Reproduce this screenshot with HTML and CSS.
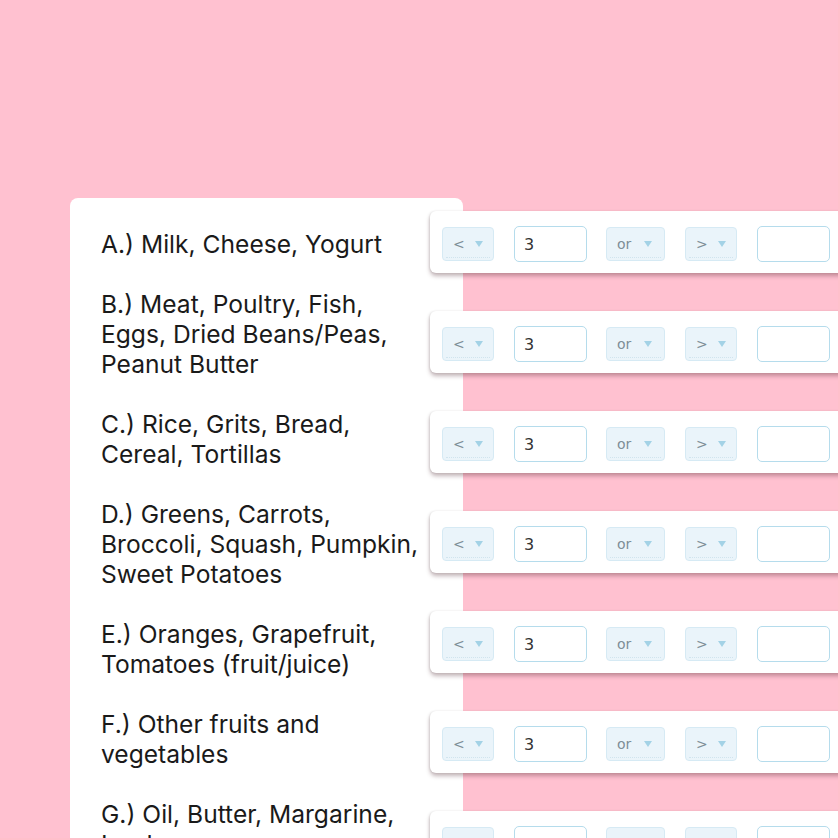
FILE: index.html
```html
<!DOCTYPE html>
<html>
<head>
<meta charset="utf-8">
<link rel="stylesheet" href="styles.css">
</head>
<body>
<div class="page">
  <div class="card">
    <div class="labels">
      <div class="label">A.) Milk, Cheese, Yogurt</div>
      <div class="label">B.) Meat, Poultry, Fish,<br>Eggs, Dried Beans/Peas,<br>Peanut Butter</div>
      <div class="label">C.) Rice, Grits, Bread,<br>Cereal, Tortillas</div>
      <div class="label">D.) Greens, Carrots,<br>Broccoli, Squash, Pumpkin,<br>Sweet Potatoes</div>
      <div class="label">E.) Oranges, Grapefruit,<br>Tomatoes (fruit/juice)</div>
      <div class="label">F.) Other fruits and<br>vegetables</div>
      <div class="label">G.) Oil, Butter, Margarine,<br>Lard</div>
    </div>
    <div class="bars">
      <div class="bar">
        <div class="sel s-lt"><span>&lt;</span><svg class="arr" viewBox="0 0 8 6"><path d="M0 0H8L4 6Z"/></svg></div>
        <div class="inp">3</div>
        <div class="sel s-or"><span>or</span><svg class="arr" viewBox="0 0 8 6"><path d="M0 0H8L4 6Z"/></svg></div>
        <div class="sel s-lt"><span>&gt;</span><svg class="arr" viewBox="0 0 8 6"><path d="M0 0H8L4 6Z"/></svg></div>
        <div class="inp"></div>
      </div>
      <div class="bar">
        <div class="sel s-lt"><span>&lt;</span><svg class="arr" viewBox="0 0 8 6"><path d="M0 0H8L4 6Z"/></svg></div>
        <div class="inp">3</div>
        <div class="sel s-or"><span>or</span><svg class="arr" viewBox="0 0 8 6"><path d="M0 0H8L4 6Z"/></svg></div>
        <div class="sel s-lt"><span>&gt;</span><svg class="arr" viewBox="0 0 8 6"><path d="M0 0H8L4 6Z"/></svg></div>
        <div class="inp"></div>
      </div>
      <div class="bar">
        <div class="sel s-lt"><span>&lt;</span><svg class="arr" viewBox="0 0 8 6"><path d="M0 0H8L4 6Z"/></svg></div>
        <div class="inp">3</div>
        <div class="sel s-or"><span>or</span><svg class="arr" viewBox="0 0 8 6"><path d="M0 0H8L4 6Z"/></svg></div>
        <div class="sel s-lt"><span>&gt;</span><svg class="arr" viewBox="0 0 8 6"><path d="M0 0H8L4 6Z"/></svg></div>
        <div class="inp"></div>
      </div>
      <div class="bar">
        <div class="sel s-lt"><span>&lt;</span><svg class="arr" viewBox="0 0 8 6"><path d="M0 0H8L4 6Z"/></svg></div>
        <div class="inp">3</div>
        <div class="sel s-or"><span>or</span><svg class="arr" viewBox="0 0 8 6"><path d="M0 0H8L4 6Z"/></svg></div>
        <div class="sel s-lt"><span>&gt;</span><svg class="arr" viewBox="0 0 8 6"><path d="M0 0H8L4 6Z"/></svg></div>
        <div class="inp"></div>
      </div>
      <div class="bar">
        <div class="sel s-lt"><span>&lt;</span><svg class="arr" viewBox="0 0 8 6"><path d="M0 0H8L4 6Z"/></svg></div>
        <div class="inp">3</div>
        <div class="sel s-or"><span>or</span><svg class="arr" viewBox="0 0 8 6"><path d="M0 0H8L4 6Z"/></svg></div>
        <div class="sel s-lt"><span>&gt;</span><svg class="arr" viewBox="0 0 8 6"><path d="M0 0H8L4 6Z"/></svg></div>
        <div class="inp"></div>
      </div>
      <div class="bar">
        <div class="sel s-lt"><span>&lt;</span><svg class="arr" viewBox="0 0 8 6"><path d="M0 0H8L4 6Z"/></svg></div>
        <div class="inp">3</div>
        <div class="sel s-or"><span>or</span><svg class="arr" viewBox="0 0 8 6"><path d="M0 0H8L4 6Z"/></svg></div>
        <div class="sel s-lt"><span>&gt;</span><svg class="arr" viewBox="0 0 8 6"><path d="M0 0H8L4 6Z"/></svg></div>
        <div class="inp"></div>
      </div>
      <div class="bar">
        <div class="sel s-lt"><span>&lt;</span><svg class="arr" viewBox="0 0 8 6"><path d="M0 0H8L4 6Z"/></svg></div>
        <div class="inp">3</div>
        <div class="sel s-or"><span>or</span><svg class="arr" viewBox="0 0 8 6"><path d="M0 0H8L4 6Z"/></svg></div>
        <div class="sel s-lt"><span>&gt;</span><svg class="arr" viewBox="0 0 8 6"><path d="M0 0H8L4 6Z"/></svg></div>
        <div class="inp"></div>
      </div>
    </div>
  </div>
</div>
</body>
</html>
```
FILE: styles.css
```css
html, body {
  margin: 0;
  padding: 0;
  height: 838px;
  overflow: hidden;
  background: #ffc1d0;
}
.page {
  padding: 198px 0 0 70px;
}
.card {
  width: 393px;
  min-height: 800px;
  background: #ffffff;
  border-radius: 8px 8px 0 0;
  display: flex;
  align-items: flex-start;
}
.labels {
  flex: 0 0 360px;
  box-sizing: border-box;
  padding: 31px 0 0 31px;
  display: flex;
  flex-direction: column;
  gap: 30px;
}
.label {
  font-family: Inter, "Liberation Sans", sans-serif;
  font-size: 24.6px;
  line-height: 30px;
  color: #1a1a1a;
  white-space: nowrap;
}
.bars {
  flex: 0 0 420px;
  padding-top: 13px;
  display: flex;
  flex-direction: column;
  gap: 38px;
}
.bar {
  height: 62px;
  box-sizing: border-box;
  background: #ffffff;
  border-radius: 6px 0 0 6px;
  box-shadow: 0 3px 4px rgba(80, 40, 50, 0.35), -1px 0 2px rgba(0, 0, 0, 0.08);
  display: flex;
  align-items: center;
  padding: 4px 0 0 12px;
  gap: 20px;
}
.sel {
  height: 34px;
  box-sizing: border-box;
  background: #eaf4fa;
  border: 1px solid #d6eaf4;
  border-radius: 4px;
  display: flex;
  align-items: center;
  font-family: "DejaVu Sans", sans-serif;
  font-size: 14px;
  color: #7d8e97;
  position: relative;
}
.sel::after {
  content: "";
  position: absolute;
  left: 3px;
  right: 3px;
  bottom: 2px;
  border-bottom: 1px dotted #d0e4ee;
}
.s-lt {
  width: 52px;
  padding-left: 10px;
}
.s-or {
  width: 59px;
  padding-left: 10px;
}
.sel span {
  width: 22px;
  line-height: 1;
}
.s-or span {
  width: 27px;
}
.arr {
  width: 8px;
  height: 6px;
  fill: #a3d2e6;
}
.inp {
  width: 73px;
  height: 36px;
  box-sizing: border-box;
  background: #ffffff;
  border: 1px solid #b5dcec;
  border-radius: 5px;
  display: flex;
  align-items: center;
  padding-left: 9px;
  font-family: "DejaVu Sans", sans-serif;
  font-size: 16px;
  color: #333333;
}
.bar > .sel:nth-child(3) {
  margin-left: -1px;
}
```
